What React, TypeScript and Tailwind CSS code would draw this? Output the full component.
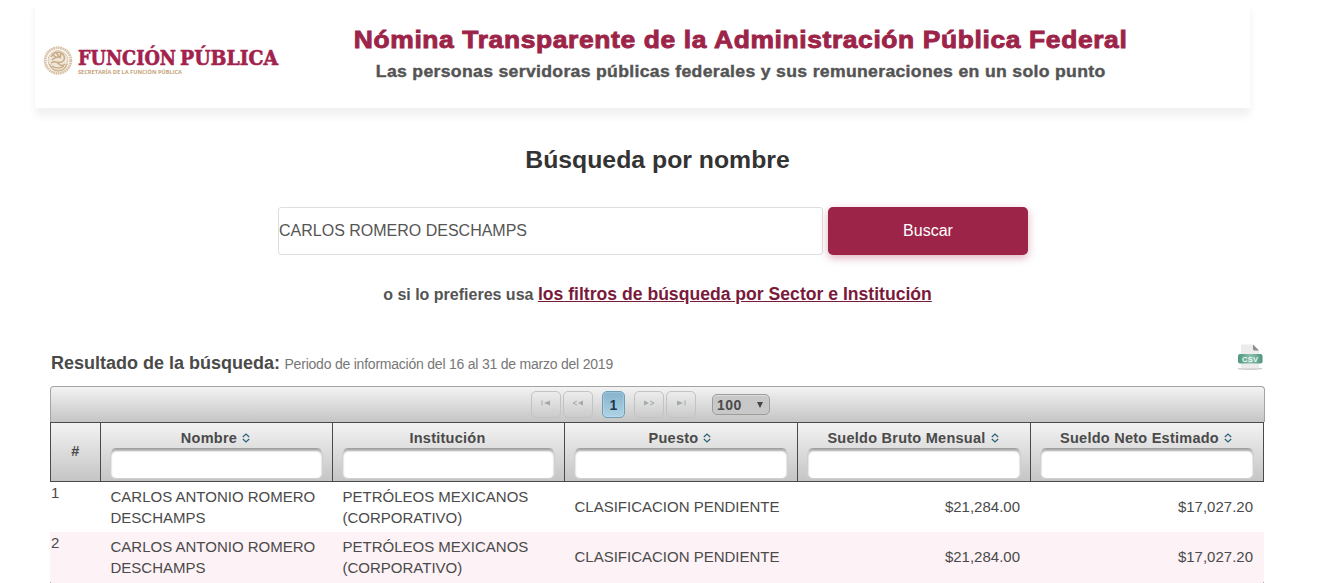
import React from "react";

const columns = [
  { title: 'Nombre', sortable: true },
  { title: 'Institución', sortable: false },
  { title: 'Puesto', sortable: true },
  { title: 'Sueldo Bruto Mensual', sortable: true },
  { title: 'Sueldo Neto Estimado', sortable: true },
];

const rows = [
  {
    id: 1,
    nombre: 'CARLOS ANTONIO ROMERO DESCHAMPS',
    institucion: 'PETRÓLEOS MEXICANOS (CORPORATIVO)',
    puesto: 'CLASIFICACION PENDIENTE',
    bruto: '$21,284.00',
    neto: '$17,027.20',
  },
  {
    id: 2,
    nombre: 'CARLOS ANTONIO ROMERO DESCHAMPS',
    institucion: 'PETRÓLEOS MEXICANOS (CORPORATIVO)',
    puesto: 'CLASIFICACION PENDIENTE',
    bruto: '$21,284.00',
    neto: '$17,027.20',
  },
];

function Logo() {
  return (
    <svg width="240" height="44" viewBox="0 -6 240 44" className="shrink-0 overflow-visible">
      <g fill="none" stroke="#c9ab84">
        <circle cx="15" cy="17.5" r="12.800" strokeWidth="2.8" strokeDasharray="1.8 0.5" opacity="0.7" />
        <circle cx="15" cy="17.5" r="10" fill="#c9ab84" fillOpacity="0.3" strokeWidth="0.6" />
        <path d="M8 14c2-4 6-6 10-4 3 1 4 4 3 7-1 2-4 3-6 2M9 17c3-3 6-4 9-2M8 20c3-2 6-1 8 1s4 2 6 0M10 12l4 3M13 9.500l3 4M18 10l-1 5M9 23c3 2 8 3 12 0" strokeWidth="1.5" />
        <path d="M6.500 21c2 5 6 7 9 7s7-2 8.500-7" strokeWidth="1.600" opacity="0.8" />
      </g>
      <g fontSize="20" fontWeight="700" fill="#a3214d" stroke="#a3214d" strokeWidth="0.6" fontFamily="'DejaVu Serif', serif">
        <text x="35" y="21.500" textLength="98" lengthAdjust="spacingAndGlyphs">FUNCIÓN</text>
        <text x="137" y="21.500" textLength="98" lengthAdjust="spacingAndGlyphs">PÚBLICA</text>
      </g>
      <text x="35" y="30.500" textLength="104" lengthAdjust="spacingAndGlyphs" fontSize="4.500" fontWeight="700" fill="#c4a477" fontFamily="'Open Sans', sans-serif">
        SECRETARÍA DE LA FUNCIÓN PÚBLICA
      </text>
    </svg>
  );
}

function CsvIcon() {
  return (
    <svg width="26" height="27" viewBox="0 0 26 27">
      <defs>
        <linearGradient id="band" x1="0" y1="0" x2="1" y2="0">
          <stop offset="0" stopColor="#4d9680" />
          <stop offset="0.5" stopColor="#8cbfae" />
          <stop offset="1" stopColor="#4d9680" />
        </linearGradient>
      </defs>
      <ellipse cx="13" cy="24.800" rx="12.500" ry="1" fill="#c4c4c4" />
      <path d="M4 0.500h12l6 6v18H4z" fill="#ececec" />
      <path d="M16 0.500l6 6h-4.500q-1.500 0-1.500-1.500z" fill="#8d8d8d" />
      <rect x="1" y="10" width="24.500" height="9.500" rx="2" fill="url(#band)" />
      <text x="13" y="17.700" textAnchor="middle" textLength="16" fontSize="7.500" fontWeight="700" fill="#edf8f3" fontFamily="'Liberation Sans', sans-serif">
        CSV
      </text>
    </svg>
  );
}

function SortIcon() {
  return (
    <svg width="8" height="10" viewBox="0 0 8 10" fill="none" stroke="#2b5f7a" strokeWidth="1.200" className="-mt-[2px]">
      <path d="M0.800 4L4 1l3.200 3M0.800 6L4 9l3.200-3" />
    </svg>
  );
}

const PageButton = ({ children }: { children: React.ReactNode }) => (
  <span className="flex h-[27px] w-[30px] justify-center rounded-[5px] border border-[#c3c3c3] pt-[8px]">
    <svg width="12" height="6" viewBox="0 0 12 6" fill="#a3a9ac" stroke="#a3a9ac" strokeWidth="0">
      {children}
    </svg>
  </span>
);

function Paginator() {
  return (
    <div className="flex h-9 items-center rounded-t-[4px] border border-b-0 border-[#a3a3a3] bg-linear-to-b from-[#f3f3f3] to-[#c5c5c5] pl-[480px]">
      <PageButton>
        <path d="M1.500 0.500h1v5h-1zM10 0.500v5L4 3z" />
      </PageButton>
      <span className="w-[2px]" />
      <PageButton>
        <path d="M5 1L1 3l4 2" fill="none" strokeWidth="1" />
        <path d="M11 0.500v5L6 3z" />
      </PageButton>
      <span className="ml-[9px] flex h-[27px] w-[23px] items-center justify-center rounded-[5px] border border-[#6f9db8] bg-linear-to-b from-[#85b2cb] to-[#afd3e5] text-sm font-bold text-[#22384d] shadow-[inset_0_0_2px_#d4ebf7]">
        1
      </span>
      <span className="w-[9px]" />
      <PageButton>
        <path d="M1 0.500v5L6 3z" />
        <path d="M7 1l4 2-4 2" fill="none" strokeWidth="1" />
      </PageButton>
      <span className="w-[2px]" />
      <PageButton>
        <path d="M2 0.500v5L8 3zM9.500 0.500h1v5h-1z" />
      </PageButton>
      <span className="ml-4 flex h-[21px] w-[58px] items-center justify-between rounded-[5px] border border-[#9c9c9c] bg-[#c8c8c8] pr-[6px] pl-1 text-sm font-bold tracking-[0.5px] shadow-[inset_0_1px_1px_#dedede]">
        100
        <svg width="6" height="6" viewBox="0 0 6 6" fill="#444">
          <path d="M0 0h6L3 6z" />
        </svg>
      </span>
    </div>
  );
}

export default function App() {
  return (
    <div className="h-[583px] w-[1326px] overflow-hidden bg-white font-['Liberation_Sans',Arial,sans-serif] text-[#4a4a4a]">
      <header className="ml-[35px] flex h-[108px] w-[1215px] pl-2 shadow-[0_8px_8px_rgba(0,0,0,0.06)]">
        <div className="pt-[37px]">
          <Logo />
        </div>
        <div className="flex w-[915px] flex-col items-center whitespace-nowrap">
          <h1 className="mt-6 origin-center scale-x-[1.1] text-[24px] leading-8 font-bold tracking-[0.57px] text-[#9d2449] [-webkit-text-stroke:0.9px_#9d2449]">
            Nómina Transparente de la Administración Pública Federal
          </h1>
          <p className="mt-1 origin-center scale-x-[1.1] text-base leading-6 font-bold tracking-[0.3px] text-[#545454] [-webkit-text-stroke:0.4px_#545454]">
            Las personas servidoras públicas federales y sus remuneraciones en un solo punto
          </p>
        </div>
      </header>

      <main className="ml-[50px] w-[1215px]">
        <h2 className="pt-[35px] text-center text-[24.8px] leading-[33px] font-bold text-[#333]">Búsqueda por nombre</h2>

        <div className="mt-[31px] flex gap-[5px] pl-[228px]">
          <div className="flex h-12 w-[545px] items-center rounded-[3px] border border-[#dedede] text-base text-[#555]">
            CARLOS ROMERO DESCHAMPS
          </div>
          <button className="h-12 w-[200px] rounded-[5px] bg-[#9d2449] text-base text-white shadow-[0_3px_8px_rgba(157,36,73,0.35)]">
            Buscar
          </button>
        </div>

        <p className="mt-[27px] text-center text-base leading-6 font-bold text-[#545454]">
          o si lo prefieres usa{' '}
          <a className="text-[17.6px] text-[#7a1a3b] underline">los filtros de búsqueda por Sector e Institución</a>
        </p>

        <div className="mt-[37px] flex h-[42px] justify-between pr-[2px] pl-px">
          <p className="mt-[5px] leading-6">
            <span className="text-lg font-bold">Resultado de la búsqueda:</span>{' '}
            <span className="text-sm tracking-[-0.22px] text-[#777]">Periodo de información del 16 al 31 de marzo del 2019</span>
          </p>
          <CsvIcon />
        </div>

        <Paginator />

        <div className="w-[1214px]">
          <div className="grid h-[60px] grid-cols-[50px_232px_232px_233px_233px_233px] border border-r-0 border-[#4a4a4a] text-[14.5px] font-bold tracking-[0.25px]">
            <div className="flex items-center justify-center border-r border-[#4a4a4a] bg-linear-to-b from-[#f3f3f3] to-[#c5c5c5]">#</div>
            {columns.map((col) => (
              <div key={col.title} className="border-r border-[#4a4a4a] bg-linear-to-b from-[#f3f3f3] to-[#c5c5c5] pr-[9px] pl-[9px]">
                <div className="flex h-[25px] items-center justify-center gap-[5px] pt-[6px] pr-[2px]">
                  {col.title}
                  {col.sortable && <SortIcon />}
                </div>
                <div className="h-[31px] rounded-[6px] border border-[#cfcfcf] border-t-[#a0a0a0] bg-white shadow-[inset_0_2px_2px_#aaa]" />
              </div>
            ))}
          </div>
          {rows.map((row) => (
            <div key={row.id} className="grid h-[50px] grid-cols-[50px_232px_232px_233px_233px_233px] items-center pl-px text-[15px] leading-[21px] odd:bg-[#fdf2f6] even:bg-white">
              <div className="self-start">{row.id}</div>
              <div className="pl-[9.5px]">{row.nombre}</div>
              <div className="pr-5 pl-[9.5px]">{row.institucion}</div>
              <div className="pb-[2px] pl-[9.5px]">{row.puesto}</div>
              <div className="pr-[11px] pb-[2px] text-right">{row.bruto}</div>
              <div className="pr-[11px] pb-[2px] text-right">{row.neto}</div>
            </div>
          ))}
          <div className="h-px border-x border-[#aaa] bg-[#fdf2f6]" />
        </div>
      </main>
    </div>
  );
}
